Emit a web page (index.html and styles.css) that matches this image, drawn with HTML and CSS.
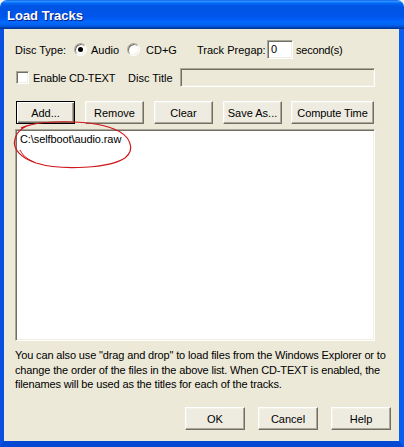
FILE: index.html
```html
<!DOCTYPE html>
<html>
<head>
<meta charset="utf-8">
<title>Load Tracks</title>
<link rel="stylesheet" href="styles.css">
</head>
<body>
<div class="window">
  <div class="titlebar"><span class="title">Load Tracks</span></div>
  <div class="frame">
    <div class="body">
      <div class="row row1">
        <span class="w-disctype">Disc Type:</span>
        <span class="radio checked"></span>
        <span class="w-audio">Audio</span>
        <span class="radio"></span>
        <span class="w-cdg">CD+G</span>
        <span class="w-pregap">Track Pregap:</span>
        <span class="field w-gap">0</span>
        <span class="w-sec">second(s)</span>
      </div>
      <div class="row row2">
        <span class="check"></span>
        <span class="w-enable">Enable CD-TEXT</span>
        <span class="w-title">Disc Title</span>
        <span class="field disabled w-disctitle"></span>
      </div>
      <div class="row buttons">
        <span class="btn default b-add">Add...</span>
        <span class="btn b-remove">Remove</span>
        <span class="btn b-clear">Clear</span>
        <span class="btn b-save">Save As...</span>
        <span class="btn b-compute">Compute Time</span>
      </div>
      <div class="listbox">
        <div class="item">C:\selfboot\audio.raw</div>
      </div>
      <p class="help">You can also use "drag and drop" to load files from the Windows Explorer or to<br>change the order of the files in the above list. When CD-TEXT is enabled, the<br>filenames will be used as the titles for each of the tracks.</p>
      <div class="footer">
        <span class="btn b-foot">OK</span>
        <span class="btn b-foot">Cancel</span>
        <span class="btn b-foot">Help</span>
      </div>
    </div>
  </div>
  <svg class="annot" width="404" height="447" viewBox="0 0 404 447">
    <path d="M 21 128 C 38 120, 88 119, 114 129 C 130 135, 136 149, 125 158 C 110 168, 62 171, 36 163 C 21 158, 12 149, 15 139 C 17 131, 24 126, 34 124" fill="none" stroke="#d0161a" stroke-width="1.2"/>
    <path d="M 20 150 C 24 158, 30 160, 34 162" fill="none" stroke="#d0161a" stroke-width="1"/>
  </svg>
</div>
</body>
</html>
```

FILE: styles.css
```css
* { box-sizing: border-box; }
html, body { margin: 0; padding: 0; }
body {
  background: #f2f2f2;
  font-family: "Liberation Sans", Arial, sans-serif;
  font-size: 11px;
  color: #000;
}
.window {
  position: relative;
  width: 404px;
  height: 447px;
  display: flex;
  flex-direction: column;
}
.titlebar {
  height: 29px;
  flex: none;
  border-radius: 7px 7px 0 0;
  background: linear-gradient(to bottom, #0058ee 0%, #3593ff 4%, #288eff 6%, #127dff 8%, #036ffc 10%, #0262ee 14%, #0057e5 20%, #0054e3 24%, #0055eb 56%, #005bf5 66%, #026afe 76%, #0062ef 86%, #0052d6 92%, #0040ab 96%, #003092 100%);
  display: flex;
  align-items: center;
  padding: 2px 0 0 7px;
}
.title {
  color: #fff;
  font-weight: bold;
  font-size: 13px;
  text-shadow: 1px 1px #0a1f80;
}
.frame {
  flex: 1;
  display: flex;
  border-style: solid;
  border-width: 0 5px 6px 4px;
  border-color: #0a58ea #0b5cf0 #0548d4 #0850e0;
}
.body {
  flex: 1;
  background: #ece9d8;
  padding: 11px 0 0 11px;
  display: flex;
  flex-direction: column;
}
.row {
  display: flex;
  align-items: center;
  height: 19px;
  flex: none;
}
.row2 { margin-top: 9px; }
.buttons { margin-top: 14px; height: 23px; }

.w-disctype { width: 59px; }
.w-audio { width: 36px; margin-left: 4px; }
.w-cdg { width: 51px; margin-left: 6px; }
.w-pregap { width: 70px; }
.w-gap { width: 26px; }
.w-sec { margin-left: 3px; letter-spacing: -0.2px; }
.w-enable { width: 95px; margin-left: 4px; letter-spacing: -0.2px; }
.w-title { width: 52px; }
.w-disctitle { width: 195px; }

.radio {
  width: 13px;
  height: 13px;
  flex: none;
  border-radius: 50%;
  border: 1px solid;
  border-color: #aca899 #fff #fff #aca899;
  box-shadow: inset 1px 1px #716f64, inset -1px -1px #f1efe2;
  background: #fff;
  display: flex;
  align-items: center;
  justify-content: center;
}
.radio.checked::after {
  content: "";
  width: 5px;
  height: 5px;
  border-radius: 50%;
  background: #000;
}
.check {
  width: 13px;
  height: 13px;
  flex: none;
  margin-left: 1px;
  border: 1px solid;
  border-color: #aca899 #fff #fff #aca899;
  box-shadow: inset 1px 1px #716f64, inset -1px -1px #f1efe2;
  background: #fff;
}
.field {
  height: 19px;
  flex: none;
  border: 1px solid;
  border-color: #aca899 #fff #fff #aca899;
  box-shadow: inset 1px 1px #716f64, inset -1px -1px #f1efe2;
  background: #fff;
  padding-left: 3px;
  line-height: 17px;
}
.field.disabled { background: #ece9d8; }

.btn {
  height: 23px;
  flex: none;
  display: flex;
  align-items: center;
  justify-content: center;
  border: 1px solid;
  border-color: #fff #716f64 #716f64 #fff;
  box-shadow: inset -1px -1px #aca899, inset 1px 1px #f4f2e8;
  background: #eeece0;
}
.btn.default {
  border-color: #000;
  box-shadow: inset 1px 1px #fff, inset -1px -1px #716f64, inset -2px -2px #aca899;
}
.b-add { width: 59px; margin-left: 1px; }
.b-remove { width: 59px; margin-left: 10px; }
.b-clear { width: 59px; margin-left: 10px; }
.b-save { width: 59px; margin-left: 10px; }
.b-compute { width: 83px; margin-left: 9px; letter-spacing: -0.1px; }

.listbox {
  margin-top: 5px;
  width: 360px;
  height: 212px;
  flex: none;
  border: 1px solid;
  border-color: #aca899 #fff #fff #aca899;
  box-shadow: inset 1px 1px #716f64, inset -1px -1px #f1efe2;
  background: #fff;
  padding: 3px 4px;
}
.item { line-height: 13px; letter-spacing: -0.1px; }

.help {
  margin: 7px 0 0 0;
  line-height: 14.5px;
  white-space: nowrap;
  letter-spacing: -0.14px;
}
.footer {
  margin-top: auto;
  margin-bottom: 11px;
  display: flex;
  justify-content: flex-end;
  gap: 13px;
  padding-right: 8px;
}
.b-foot { width: 60px; }

.annot {
  position: absolute;
  left: 0;
  top: 0;
  pointer-events: none;
}
```
